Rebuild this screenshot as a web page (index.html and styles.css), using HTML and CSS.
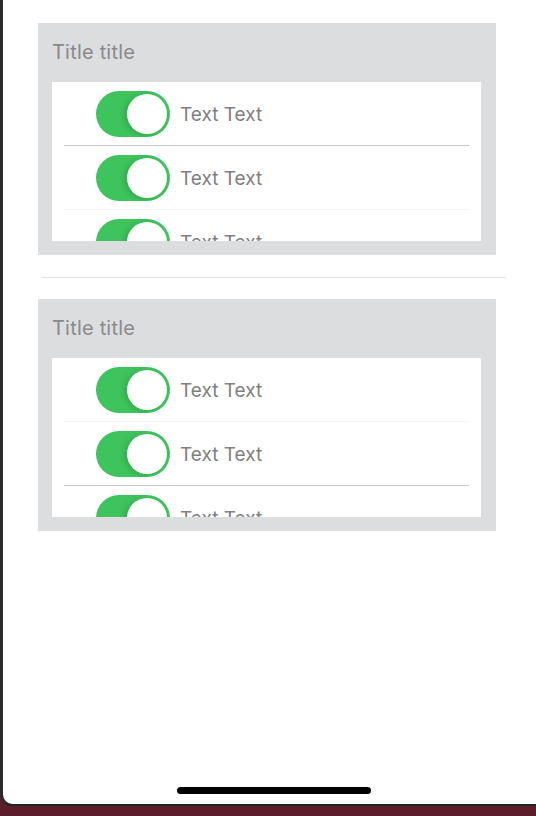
FILE: index.html
```html
<!DOCTYPE html>
<html>
<head>
<meta charset="utf-8">
<link rel="stylesheet" href="styles.css">
</head>
<body>
<div class="screen">
  <section class="card">
    <div class="card-title">Title title</div>
    <div class="list">
      <div class="row sep"><span class="toggle"><span class="thumb"></span></span><span class="label">Text Text</span></div>
      <div class="row sep-faint"><span class="toggle"><span class="thumb"></span></span><span class="label">Text Text</span></div>
      <div class="row"><span class="toggle"><span class="thumb"></span></span><span class="label">Text Text</span></div>
    </div>
  </section>
  <div class="divider"></div>
  <section class="card">
    <div class="card-title">Title title</div>
    <div class="list">
      <div class="row sep-faint"><span class="toggle"><span class="thumb"></span></span><span class="label">Text Text</span></div>
      <div class="row sep"><span class="toggle"><span class="thumb"></span></span><span class="label">Text Text</span></div>
      <div class="row"><span class="toggle"><span class="thumb"></span></span><span class="label">Text Text</span></div>
    </div>
  </section>
  <div class="home-indicator"></div>
</div>
</body>
</html>
```

FILE: styles.css
```css
html, body {
  margin: 0;
  padding: 0;
}
body {
  background: #5b1d29;
  height: 816px;
  overflow: hidden;
  font-family: Inter, "Noto Sans", "Liberation Sans", sans-serif;
}
.screen {
  box-sizing: border-box;
  height: 806px;
  background: #ffffff;
  border-left: 3px solid #2a2a2a;
  border-bottom: 2px solid #222222;
  border-bottom-left-radius: 12px;
  display: flex;
  flex-direction: column;
  padding-top: 23px;
}
.card {
  box-sizing: border-box;
  width: 458px;
  margin-left: 35px;
  background: #dcdddf;
  padding: 0 15px 14px 14px;
}
.card-title {
  height: 59px;
  box-sizing: border-box;
  padding-top: 17px;
  font-size: 20px;
  line-height: 24px;
  color: #8a8a8a;
  font-weight: 400;
  letter-spacing: 0.2px;
}
.list {
  background: #ffffff;
  height: 159px;
  overflow: hidden;
}
.row {
  display: flex;
  align-items: center;
  margin: 0 12px;
  padding: 9px 0 8px 32px;
  border-bottom: 1px solid transparent;
}
.row.sep {
  border-bottom-color: #c8c8c8;
}
.row.sep-faint {
  border-bottom-color: #f4f4f4;
}
.toggle {
  position: relative;
  width: 74px;
  height: 46px;
  border-radius: 23px;
  background: #3dc45c;
  flex: none;
}
.thumb {
  position: absolute;
  right: 3px;
  top: 3px;
  width: 40px;
  height: 40px;
  border-radius: 50%;
  background: #ffffff;
  box-shadow: -3px 1px 5px rgba(0, 60, 20, 0.18);
}
.label {
  margin-left: 10px;
  font-size: 19px;
  color: #808080;
  line-height: 24px;
  padding-top: 2px;
}
.divider {
  width: 464px;
  height: 1px;
  background: #e2e2e2;
  margin: 22px 0 21px 39px;
}
.home-indicator {
  width: 194px;
  height: 7px;
  border-radius: 4px;
  background: #000000;
  margin: auto 0 10px 174px;
}
```
